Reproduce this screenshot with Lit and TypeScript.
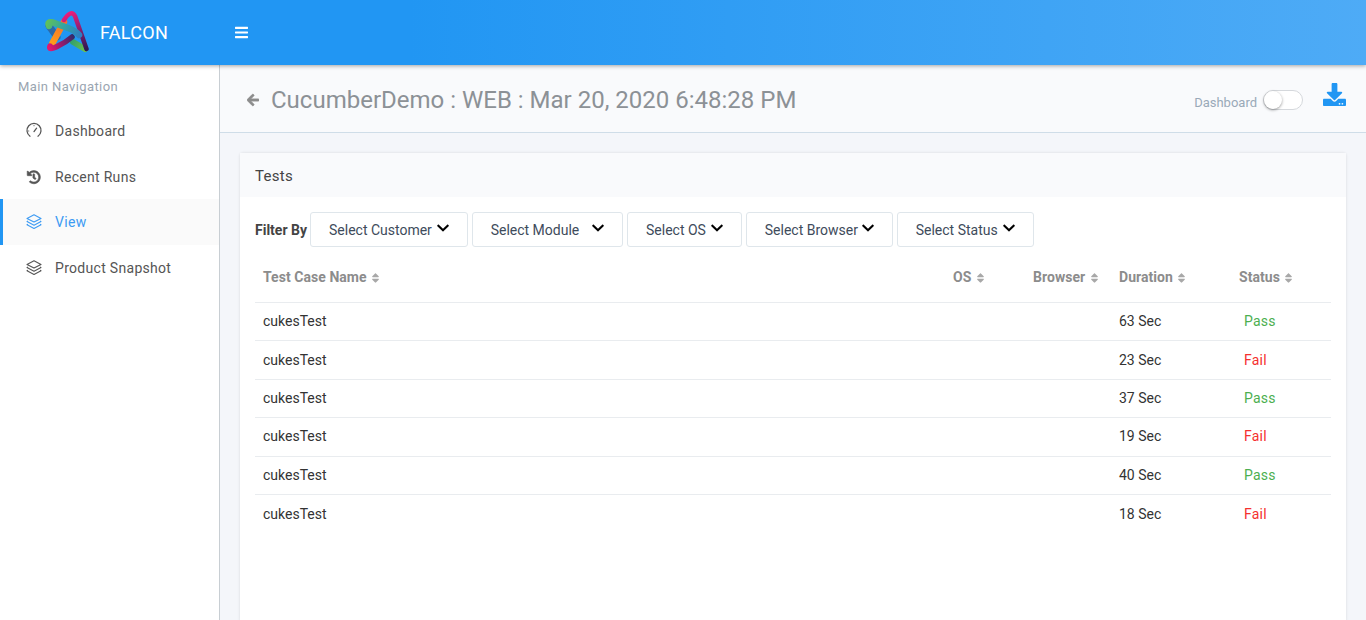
import { LitElement, html, css, svg } from 'lit';
import { customElement } from 'lit/decorators.js';

const chevron = html`<svg class="chev" viewBox="0 0 448 512"><path d="M207.029 381.476L12.686 187.132c-9.373-9.373-9.373-24.569 0-33.941l22.667-22.667c9.357-9.357 24.522-9.375 33.901-.04L224 284.505l154.745-154.021c9.379-9.335 24.544-9.317 33.901.04l22.667 22.667c9.373 9.373 9.373 24.569 0 33.941L240.971 381.476c-9.373 9.372-24.569 9.372-33.942 0z" /></svg>`;

const sortIcon = html`<svg class="sort" viewBox="0 0 320 512"><path d="M41 288h238c21.4 0 32.1 25.9 17 41L177 448c-9.4 9.4-24.6 9.4-33.9 0L24 329c-15.1-15.1-4.4-41 17-41zm255-105L177 64c-9.4-9.4-24.6-9.4-33.9 0L24 183c-15.1 15.1-4.4 41 17 41h238c21.4 0 32.1-25.9 17-41z" /></svg>`;

const gauge = svg`<path d="M5 14.2A7 7 0 1 1 13 14.2" fill="none" stroke="currentColor" stroke-width="1.3" stroke-linecap="round" /><path d="M9 9.6L11.6 6.2" stroke="currentColor" stroke-width="1.3" stroke-linecap="round" /><path d="M4.2 9H3.2M9 4.2V3.2" stroke="currentColor" stroke-width="1" />`;

const history = svg`<g transform="translate(2 2.4) scale(0.0265)" stroke="currentColor" stroke-width="22"><path fill="currentColor" d="M504 255.531c.253 136.64-111.18 248.372-247.82 248.468-59.015.042-113.223-20.53-155.822-54.911-11.077-8.94-11.905-25.541-1.839-35.607l11.267-11.267c8.609-8.609 22.353-9.551 31.891-1.984C173.062 425.135 212.781 440 256 440c101.705 0 184-82.311 184-184 0-101.705-82.311-184-184-184-48.814 0-93.149 18.969-126.068 49.932l50.754 50.754c10.08 10.08 2.941 27.314-11.313 27.314H24c-8.837 0-16-7.163-16-16V38.627c0-14.254 17.234-21.393 27.314-11.314l49.372 49.372C129.209 34.136 189.552 8 256 8c136.81 0 247.747 110.78 248 247.531zm-180.912 78.784l9.823-12.63c8.138-10.463 6.253-25.542-4.21-33.679L288 256.349V152c0-13.255-10.745-24-24-24h-16c-13.255 0-24 10.745-24 24v135.651l65.409 50.874c10.463 8.137 25.541 6.253 33.679-4.21z" /></g>`;

const layers = svg`<g fill="none" stroke="currentColor" stroke-width="1.1" stroke-linejoin="round" stroke-linecap="round"><path d="M9 1.8L16 5.4L9 9L2 5.4Z" /><path d="M2.6 8.2L2 8.6L9 12.2L16 8.6L15.4 8.2" /><path d="M2.6 11.4L2 11.8L9 15.4L16 11.8L15.4 11.4" /></g>`;

const navItems = [
  { label: 'Dashboard', icon: gauge },
  { label: 'Recent Runs', icon: history },
  { label: 'View', icon: layers, active: true },
  { label: 'Product Snapshot', icon: layers },
];

const filters = [
  { label: 'Select Customer', gap: 5 },
  { label: 'Select Module', gap: 13 },
  { label: 'Select OS', gap: 5 },
  { label: 'Select Browser', gap: 4 },
  { label: 'Select Status', gap: 5 },
];

const columns = ['Test Case Name', 'OS', 'Browser', 'Duration', 'Status'];

const rows = [
  { name: 'cukesTest', duration: '63 Sec', status: 'Pass' },
  { name: 'cukesTest', duration: '23 Sec', status: 'Fail' },
  { name: 'cukesTest', duration: '37 Sec', status: 'Pass' },
  { name: 'cukesTest', duration: '19 Sec', status: 'Fail' },
  { name: 'cukesTest', duration: '40 Sec', status: 'Pass' },
  { name: 'cukesTest', duration: '18 Sec', status: 'Fail' },
];

@customElement('app-root')
export class AppRoot extends LitElement {
  static styles = css`
    :host {
      display: block;
      height: 620px;
      overflow: hidden;
      font-family: Roboto, 'Liberation Sans', sans-serif;
      font-size: 14px;
      color: #3e4b5b;
      background: #f4f6fa;
    }

    .topbar {
      position: relative;
      z-index: 2;
      height: 65px;
      display: flex;
      align-items: center;
      background: linear-gradient(90deg, #2196f3 0%, #2196f3 30%, #4eabf6 100%);
      box-shadow: 0 1px 4px rgba(0, 0, 0, 0.35);
      color: #fff;
    }
    .brand {
      width: 234px;
      display: flex;
      align-items: center;
      padding-left: 45px;
      box-sizing: border-box;
      font-size: 18px;
      letter-spacing: 0.3px;
    }
    .logo {
      width: 46px;
      height: 46px;
      margin-right: 9px;
    }
    .bars {
      width: 13px;
      height: 15px;
      margin-left: 1px;
      fill: #fff;
    }

    .body {
      display: flex;
      height: 555px;
    }

    .sidebar {
      width: 220px;
      flex: none;
      box-sizing: border-box;
      background: #fff;
      border-right: 1px solid #c8ced3;
    }
    .nav-title {
      padding: 14px 18px 0;
      height: 43.3px;
      box-sizing: border-box;
      font-size: 13px;
      color: #9aa5b1;
      letter-spacing: 0.4px;
    }
    .nav-item {
      height: 45.5px;
      display: flex;
      align-items: center;
      padding-left: 25px;
      box-sizing: border-box;
      color: #555;
      letter-spacing: 0.3px;
    }
    .nav-item svg {
      width: 18px;
      height: 18px;
      margin-right: 12px;
      color: #555;
    }
    .nav-item.active {
      padding-left: 22px;
      background: #fafafa;
      border-left: 3px solid #2196f3;
      color: #3d9bf3;
    }
    .nav-item.active svg {
      color: #3d9bf3;
    }

    .main {
      flex: 1;
      min-width: 0;
    }
    .page-head {
      height: 68px;
      box-sizing: border-box;
      display: flex;
      align-items: center;
      padding: 2px 20px 0 27px;
      background: #f9fafc;
      border-bottom: 1px solid #cfdde8;
    }
    .back {
      width: 12px;
      height: 14px;
      fill: #8c8c8c;
      stroke: #8c8c8c;
      stroke-width: 30;
      margin-right: 12px;
    }
    .page-title {
      flex: 1;
      font-size: 24px;
      color: #8c9196;
    }
    .switch-label {
      font-size: 13px;
      color: #9aa9b8;
      margin: 6px 6px 0 0;
    }
    .switch {
      position: relative;
      width: 40px;
      height: 20px;
      box-sizing: border-box;
      margin-right: 20px;
      border: 1px solid #d5d8dc;
      border-radius: 10px;
      background: #fff;
    }
    .switch::before {
      content: '';
      position: absolute;
      left: 0;
      top: 0;
      width: 18px;
      height: 18px;
      border-radius: 50%;
      background: #fff;
      box-shadow: 0 1px 3px rgba(0, 0, 0, 0.4);
    }
    .download {
      width: 23px;
      height: 23px;
      fill: #2196f3;
      margin-bottom: 10px;
    }

    .card {
      margin: 20px 20px 0;
      height: 470px;
      background: #fff;
      border-radius: 3px;
      box-shadow: 0 0 3px rgba(0, 0, 0, 0.12);
    }
    .card-head {
      height: 44px;
      box-sizing: border-box;
      padding: 14px 15px 0;
      background: #f9fafc;
      font-size: 15px;
      letter-spacing: 0.3px;
      color: #444;
    }
    .card-body {
      padding: 15px 15px 0;
    }

    .filters {
      display: flex;
      align-items: center;
      gap: 3.8px;
    }
    .filter-label {
      font-weight: 700;
      color: #444;
      margin-right: -0.8px;
    }
    .filter {
      display: flex;
      align-items: center;
      height: 35px;
      box-sizing: border-box;
      padding: 0 18px;
      background: #fff;
      border: 1px solid #dfe6eb;
      border-radius: 3px;
      font: inherit;
      color: #3e4b5b;
    }
    .chev {
      width: 12px;
      height: 14px;
      fill: #000;
      margin-top: -3px;
    }

    table {
      width: 1076px;
      margin-top: 4px;
      border-collapse: collapse;
      table-layout: fixed;
    }
    col.name {
      width: 690px;
    }
    col.os {
      width: 80px;
    }
    col.browser {
      width: 86px;
    }
    col.duration {
      width: 120px;
    }
    col.state {
      width: 100px;
    }
    th {
      height: 51px;
      padding: 0 8px;
      text-align: left;
      font-weight: 700;
      letter-spacing: 0.05px;
      color: #8c8c8c;
      border-bottom: 1px solid #e9ecef;
    }
    .sort {
      width: 9px;
      height: 12px;
      fill: #a8a8a8;
      margin-left: 1px;
      vertical-align: -2px;
    }
    td {
      height: 38.4px;
      box-sizing: border-box;
      padding: 0 8px 0.8px;
      color: #333;
      border-bottom: 1px solid #e9ecef;
    }
    tr:last-child td {
      border-bottom: 0;
    }
    td.status {
      padding-left: 13px;
      letter-spacing: 0.2px;
    }
    .Pass {
      color: #4caf50;
    }
    .Fail {
      color: #f5302e;
    }
  `;

  renderLogo() {
    return html`<svg class="logo" viewBox="45 11 46 46" fill="none" stroke-linecap="round" stroke-linejoin="round">
      <defs>
        <linearGradient id="lg-a" gradientUnits="userSpaceOnUse" x1="70" y1="13" x2="88" y2="52">
          <stop offset="0" stop-color="#ec1c7c" /><stop offset="0.45" stop-color="#8e1f70" /><stop offset="1" stop-color="#25184f" />
        </linearGradient>
        <linearGradient id="lg-b" gradientUnits="userSpaceOnUse" x1="48" y1="22" x2="80" y2="36">
          <stop offset="0" stop-color="#5fc05c" /><stop offset="0.5" stop-color="#30a3a6" /><stop offset="1" stop-color="#2f7fc0" />
        </linearGradient>
        <linearGradient id="lg-c" gradientUnits="userSpaceOnUse" x1="51" y1="46" x2="64" y2="24">
          <stop offset="0" stop-color="#ffa11a" /><stop offset="1" stop-color="#f4702a" />
        </linearGradient>
        <linearGradient id="lg-d" gradientUnits="userSpaceOnUse" x1="49" y1="49" x2="76" y2="38">
          <stop offset="0" stop-color="#e4176f" /><stop offset="0.5" stop-color="#8b1c6c" /><stop offset="1" stop-color="#24306a" />
        </linearGradient>
        <linearGradient id="lg-e" gradientUnits="userSpaceOnUse" x1="70" y1="42" x2="86" y2="51">
          <stop offset="0" stop-color="#2f9d6f" /><stop offset="1" stop-color="#6cc24a" />
        </linearGradient>
      </defs>
      <path d="M49 27L57 38" stroke="#2d6aa6" stroke-width="7" />
      <path d="M73 43L85 50" stroke="url(#lg-e)" stroke-width="6" />
      <path d="M52.5 44L64 23" stroke="url(#lg-c)" stroke-width="6.5" />
      <path d="M72 38Q65 44 58 47Q48 52 50 47" stroke="url(#lg-d)" stroke-width="5.5" />
      <path d="M64 21Q71 10 75 17L86.5 50" stroke="url(#lg-a)" stroke-width="4.5" />
      <path d="M79 36Q76 32 68 29L53 23.5Q47 22 49 27" stroke="url(#lg-b)" stroke-width="6.5" />
    </svg>`;
  }

  render() {
    return html`
      <header class="topbar">
        <div class="brand">${this.renderLogo()}<span>FALCON</span></div>
        <svg class="bars" viewBox="0 0 448 512"><path d="M16 132h416c8.837 0 16-7.163 16-16V76c0-8.837-7.163-16-16-16H16C7.163 60 0 67.163 0 76v40c0 8.837 7.163 16 16 16zm0 160h416c8.837 0 16-7.163 16-16v-40c0-8.837-7.163-16-16-16H16c-8.837 0-16 7.163-16 16v40c0 8.837 7.163 16 16 16zm0 160h416c8.837 0 16-7.163 16-16v-40c0-8.837-7.163-16-16-16H16c-8.837 0-16 7.163-16 16v40c0 8.837 7.163 16 16 16z" /></svg>
      </header>
      <div class="body">
        <nav class="sidebar">
          <div class="nav-title">Main Navigation</div>
          ${navItems.map(
            (item) => html`<div class="nav-item ${item.active ? 'active' : ''}">
              <svg viewBox="0 0 18 18">${item.icon}</svg>${item.label}
            </div>`,
          )}
        </nav>
        <main class="main">
          <div class="page-head">
            <svg class="back" viewBox="0 0 448 512"><path d="M257.5 445.1l-22.2 22.2c-9.4 9.4-24.6 9.4-33.9 0L7 273c-9.4-9.4-9.4-24.6 0-33.9L201.4 44.7c9.4-9.4 24.6-9.4 33.9 0l22.2 22.2c9.5 9.5 9.3 25-.4 34.3L136.6 216H424c13.3 0 24 10.7 24 24v32c0 13.3-10.7 24-24 24H136.6l120.5 114.8c9.8 9.3 10 24.8.4 34.3z" /></svg>
            <div class="page-title">CucumberDemo : WEB : Mar 20, 2020 6:48:28 PM</div>
            <span class="switch-label">Dashboard</span>
            <span class="switch"></span>
            <svg class="download" viewBox="0 0 512 512"><path d="M216 0h80c13.3 0 24 10.7 24 24v168h87.7c17.8 0 26.7 21.5 14.1 34.1L269.7 378.3c-7.5 7.5-19.8 7.5-27.3 0L90.1 226.1c-12.6-12.6-3.7-34.1 14.1-34.1H192V24c0-13.3 10.7-24 24-24zm296 376v112c0 13.3-10.7 24-24 24H24c-13.3 0-24-10.7-24-24V376c0-13.3 10.7-24 24-24h146.7l49 49c20.1 20.1 52.5 20.1 72.6 0l49-49H488c13.3 0 24 10.7 24 24zm-124 88c0-11-9-20-20-20s-20 9-20 20 9 20 20 20 20-9 20-20zm64 0c0-11-9-20-20-20s-20 9-20 20 9 20 20 20 20-9 20-20z" /></svg>
          </div>
          <section class="card">
            <div class="card-head">Tests</div>
            <div class="card-body">
              <div class="filters">
                <span class="filter-label">Filter By</span>
                ${filters.map(
                  (f) => html`<button class="filter" style="gap: ${f.gap}px">${f.label}${chevron}</button>`,
                )}
              </div>
              <table>
                <colgroup>
                  <col class="name" /><col class="os" /><col class="browser" /><col class="duration" /><col class="state" />
                </colgroup>
                <thead>
                  <tr>${columns.map((c) => html`<th>${c} ${sortIcon}</th>`)}</tr>
                </thead>
                <tbody>
                  ${rows.map(
                    (r) => html`<tr>
                      <td>${r.name}</td>
                      <td></td>
                      <td></td>
                      <td>${r.duration}</td>
                      <td class="status ${r.status}">${r.status}</td>
                    </tr>`,
                  )}
                </tbody>
              </table>
            </div>
          </section>
        </main>
      </div>
    `;
  }
}
